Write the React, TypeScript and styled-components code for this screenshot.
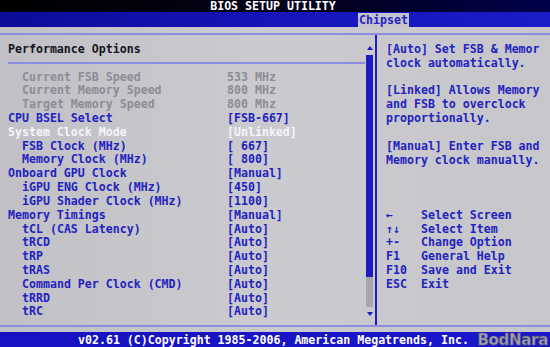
import React from 'react';
import styled, { createGlobalStyle } from 'styled-components';

const GlobalStyle = createGlobalStyle`
  html, body {
    margin: 0;
    padding: 0;
    background: #c6c6ca;
  }
  body {
    font-family: "DejaVu Sans Mono", "Liberation Mono", monospace;
  }
`;

const LINE = 13.82;
const BLUE = '#2222c0';
const LAVENDER = '#8c8ce0';

const Screen = styled.div`
  width: 550px;
  height: 347px;
  display: flex;
  flex-direction: column;
  overflow: hidden;
  font-size: 11.6px;
  font-weight: bold;
  background: linear-gradient(90deg, #c0c0c6 0%, #cbcbcf 50%, #c6c6cb 100%);
`;

const TitleBar = styled.div`
  height: 12px;
  line-height: 12px;
  padding-right: 4px;
  text-align: center;
  color: #ffffff;
  background: linear-gradient(90deg, #000000 0%, #02021a 55%, #00004a 100%);
`;

const TabBar = styled.div`
  height: 15px;
  display: flex;
  align-items: flex-end;
  padding-left: 358px;
  background: linear-gradient(90deg, #0c0c98 0%, #1616bc 55%, #1c1cc8 100%);
`;

const Tab = styled.div`
  height: 14px;
  line-height: 15px;
  padding: 0 1px;
  color: ${BLUE};
  background: #c4c4cc;
`;

const Body = styled.div`
  flex: 1;
  min-height: 0;
  display: flex;
  padding: 6px 0 5px;
`;

const Frame = styled.div`
  flex: 1;
  min-height: 0;
  display: flex;
  border-top: 2px solid ${LAVENDER};
  border-bottom: 2px solid ${LAVENDER};
`;

const LeftPanel = styled.div`
  width: 375px;
  display: flex;
  overflow: hidden;
  border-right: 2px solid #1c1cc4;
`;

const Content = styled.div`
  width: 366px;
  padding-top: 8px;
  line-height: ${LINE}px;
  white-space: pre;
`;

const Heading = styled.div`
  padding-left: 8px;
  color: #14141c;
`;

const Rule = styled.div`
  height: 2px;
  width: 357px;
  margin: 5px 0 6.8px 8px;
  background: ${LAVENDER};
`;

type Tone = 'normal' | 'dim' | 'active';

const toneColor = (t: Tone) =>
  t === 'dim' ? '#8c8c94' : t === 'active' ? '#f6f6fa' : BLUE;

const Row = styled.div<{ $tone: Tone }>`
  display: grid;
  grid-template-columns: 227px 1fr;
  color: ${(p) => toneColor(p.$tone)};
`;

const Label = styled.span<{ $indent: number }>`
  padding-left: ${(p) => 8 + p.$indent * 14}px;
`;

const Scrollbar = styled.div`
  width: 7px;
  display: flex;
  flex-direction: column;
  align-items: center;
  padding-top: 11px;
`;

const Arrow = styled.div<{ $down?: boolean }>`
  width: 0;
  height: 0;
  border-left: 3px solid transparent;
  border-right: 3px solid transparent;
  ${(p) =>
    p.$down
      ? `border-top: 4px solid #1c1cc0; margin-top: 5px;`
      : `border-bottom: 4px solid #1c1cc0; margin-bottom: 5px;`}
`;

const Thumb = styled.div`
  width: 7px;
  height: 222px;
  background: #1c1cc0;
`;

const Track = styled.div`
  width: 7px;
  height: 30px;
  background: #a6a6ae;
`;

const RightPanel = styled.div`
  flex: 1;
  padding: 8px 0 0 9px;
  color: ${BLUE};
  line-height: ${LINE}px;
  white-space: pre;
  overflow: hidden;
`;

const HelpPara = styled.div<{ $last?: boolean }>`
  margin-bottom: ${(p) => (p.$last ? 0 : LINE)}px;
`;

const Legend = styled.div`
  margin-top: ${LINE * 3}px;
`;

const LegendRow = styled.div`
  display: grid;
  grid-template-columns: 35px auto;
`;

const Footer = styled.div`
  height: 15px;
  display: flex;
  align-items: center;
  padding-left: 78px;
  color: #ffffff;
  background: linear-gradient(90deg, #1612c0 0%, #1a16cc 100%);
  white-space: pre;
`;

const Watermark = styled.span`
  margin-left: auto;
  margin-right: 2px;
  font-family: "DejaVu Sans", sans-serif;
  font-size: 15px;
  font-weight: bold;
  letter-spacing: -0.3px;
  color: #a4a4b4;
  -webkit-text-stroke: 0.7px #56566a;
`;

type Item = { label: string; value: string; indent: number; tone?: Tone };

const items: Item[] = [
  { label: 'Current FSB Speed', value: '533 MHz', indent: 1, tone: 'dim' },
  { label: 'Current Memory Speed', value: '800 MHz', indent: 1, tone: 'dim' },
  { label: 'Target Memory Speed', value: '800 Mhz', indent: 1, tone: 'dim' },
  { label: 'CPU BSEL Select', value: '[FSB-667]', indent: 0 },
  { label: 'System Clock Mode', value: '[Unlinked]', indent: 0, tone: 'active' },
  { label: 'FSB Clock (MHz)', value: '[ 667]', indent: 1 },
  { label: 'Memory Clock (MHz)', value: '[ 800]', indent: 1 },
  { label: 'Onboard GPU Clock', value: '[Manual]', indent: 0 },
  { label: 'iGPU ENG Clock (MHz)', value: '[450]', indent: 1 },
  { label: 'iGPU Shader Clock (MHz)', value: '[1100]', indent: 1 },
  { label: 'Memory Timings', value: '[Manual]', indent: 0 },
  { label: 'tCL (CAS Latency)', value: '[Auto]', indent: 1 },
  { label: 'tRCD', value: '[Auto]', indent: 1 },
  { label: 'tRP', value: '[Auto]', indent: 1 },
  { label: 'tRAS', value: '[Auto]', indent: 1 },
  { label: 'Command Per Clock (CMD)', value: '[Auto]', indent: 1 },
  { label: 'tRRD', value: '[Auto]', indent: 1 },
  { label: 'tRC', value: '[Auto]', indent: 1 },
];

const help = [
  ['[Auto] Set FSB & Memor', 'clock automatically.'],
  ['[Linked] Allows Memory', 'and FSB to overclock', 'proportionally.'],
  ['[Manual] Enter FSB and', 'Memory clock manually.'],
];

const keys = [
  ['←', 'Select Screen'],
  ['↑↓', 'Select Item'],
  ['+-', 'Change Option'],
  ['F1', 'General Help'],
  ['F10', 'Save and Exit'],
  ['ESC', 'Exit'],
];

export default function App() {
  return (
    <>
      <GlobalStyle />
      <Screen>
        <TitleBar>BIOS SETUP UTILITY</TitleBar>
        <TabBar>
          <Tab>Chipset</Tab>
        </TabBar>
        <Body>
          <Frame>
            <LeftPanel>
              <Content>
                <Heading>Performance Options</Heading>
                <Rule />
                {items.map((it) => (
                  <Row key={it.label} $tone={it.tone ?? 'normal'}>
                    <Label $indent={it.indent}>{it.label}</Label>
                    <span>{it.value}</span>
                  </Row>
                ))}
              </Content>
              <Scrollbar>
                <Arrow />
                <Thumb />
                <Track />
                <Arrow $down />
              </Scrollbar>
            </LeftPanel>
            <RightPanel>
              {help.map((para, i) => (
                <HelpPara key={i} $last={i === help.length - 1}>
                  {para.map((line) => (
                    <div key={line}>{line}</div>
                  ))}
                </HelpPara>
              ))}
              <Legend>
                {keys.map(([k, d]) => (
                  <LegendRow key={k}>
                    <span>{k}</span>
                    <span>{d}</span>
                  </LegendRow>
                ))}
              </Legend>
            </RightPanel>
          </Frame>
        </Body>
        <Footer>
          v02.61 (C)Copyright 1985-2006, American Megatrends, Inc.
          <Watermark>BodNara</Watermark>
        </Footer>
      </Screen>
    </>
  );
}
